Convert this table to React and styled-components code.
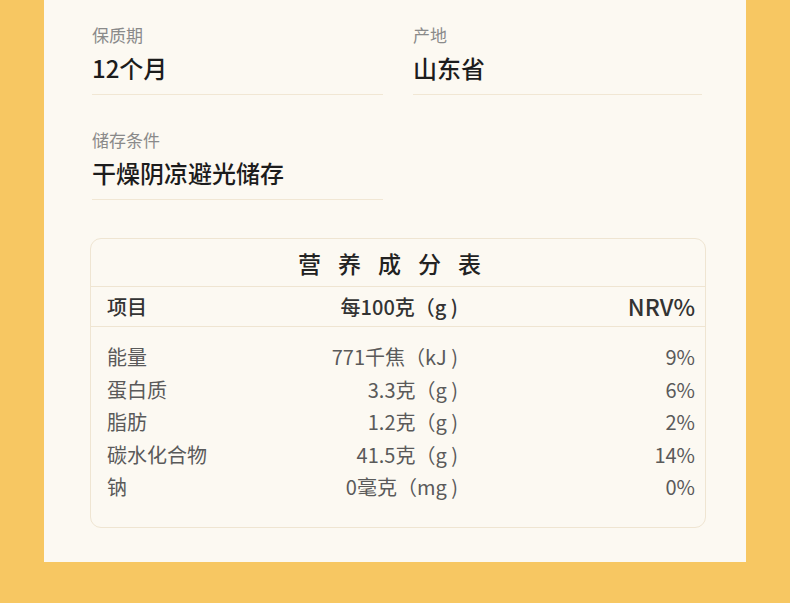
import React from "react";
import styled, { createGlobalStyle } from "styled-components";

const Global = createGlobalStyle`
  html, body { margin: 0; padding: 0; background: #f7c762; }
  body { font-family: "Noto Sans CJK SC", "Noto Sans", sans-serif; }
`;

const Page = styled.div`
  width: 790px;
  height: 603px;
  background: #f7c762;
  overflow: hidden;
`;

const Card = styled.div`
  margin-left: 44px;
  width: 702px;
  height: 562px;
  box-sizing: border-box;
  background: #fcf9f2;
  padding: 23px 44px 0 48px;
`;

const InfoGrid = styled.div`
  display: grid;
  grid-template-columns: 291px 289px;
  column-gap: 30px;
  row-gap: 33px;
`;

const Field = styled.div`
  display: flex;
  flex-direction: column;
  gap: 5px;
  padding-bottom: 10px;
  border-bottom: 1px solid #f1e7d4;
`;

const Label = styled.div`
  font-size: 17px;
  line-height: 24px;
  color: #8a8a8a;
`;

const Value = styled.div`
  font-size: 24px;
  line-height: 32px;
  font-weight: 500;
  color: #1c1c1c;
`;

const Table = styled.div`
  margin: 38px 0 0 -2px;
  width: 616px;
  height: 290px;
  box-sizing: border-box;
  border: 1px solid #efe5d2;
  border-radius: 11px;
  display: flex;
  flex-direction: column;
`;

const Title = styled.div`
  height: 47px;
  display: flex;
  align-items: center;
  justify-content: center;
  font-size: 23px;
  font-weight: 500;
  letter-spacing: 17px;
  color: #222;
  border-bottom: 1px solid #efe5d2;
`;

const Row = styled.div`
  display: grid;
  grid-template-columns: 200px 151px 1fr;
  align-items: center;
  padding: 0 10px 0 16px;
  height: ${(p) => (p.$head ? "39px" : "32.5px")};
  border-bottom: ${(p) => (p.$head ? "1px solid #efe5d2" : "none")};
  margin-bottom: ${(p) => (p.$head ? "14px" : "0")};
  color: ${(p) => (p.$head ? "#333" : "#5a5a5a")};
  font-weight: ${(p) => (p.$head ? 500 : 400)};
  font-size: 20px;
`;

const Cell = styled.div`
  text-align: ${(p) => p.$align || "left"};
  font-size: ${(p) => p.$size || "inherit"};
  line-height: 1;
  white-space: pre;
`;

const rows = [
  ["能量", "771千焦（kJ )", "9%"],
  ["蛋白质", "3.3克（g )", "6%"],
  ["脂肪", "1.2克（g )", "2%"],
  ["碳水化合物", "41.5克（g )", "14%"],
  ["钠", "0毫克（mg )", "0%"],
];

export default function App() {
  return (
    <Page>
      <Global />
      <Card>
        <InfoGrid>
          <Field>
            <Label>保质期</Label>
            <Value>12个月</Value>
          </Field>
          <Field>
            <Label>产地</Label>
            <Value>山东省</Value>
          </Field>
          <Field>
            <Label>储存条件</Label>
            <Value>干燥阴凉避光储存</Value>
          </Field>
        </InfoGrid>
        <Table>
          <Title>营养成分表</Title>
          <Row $head>
            <Cell>项目</Cell>
            <Cell $align="right">每100克（g )</Cell>
            <Cell $align="right" $size="23px">NRV%</Cell>
          </Row>
          {rows.map(([n, v, p]) => (
            <Row key={n}>
              <Cell>{n}</Cell>
              <Cell $align="right">{v}</Cell>
              <Cell $align="right">{p}</Cell>
            </Row>
          ))}
        </Table>
      </Card>
    </Page>
  );
}
